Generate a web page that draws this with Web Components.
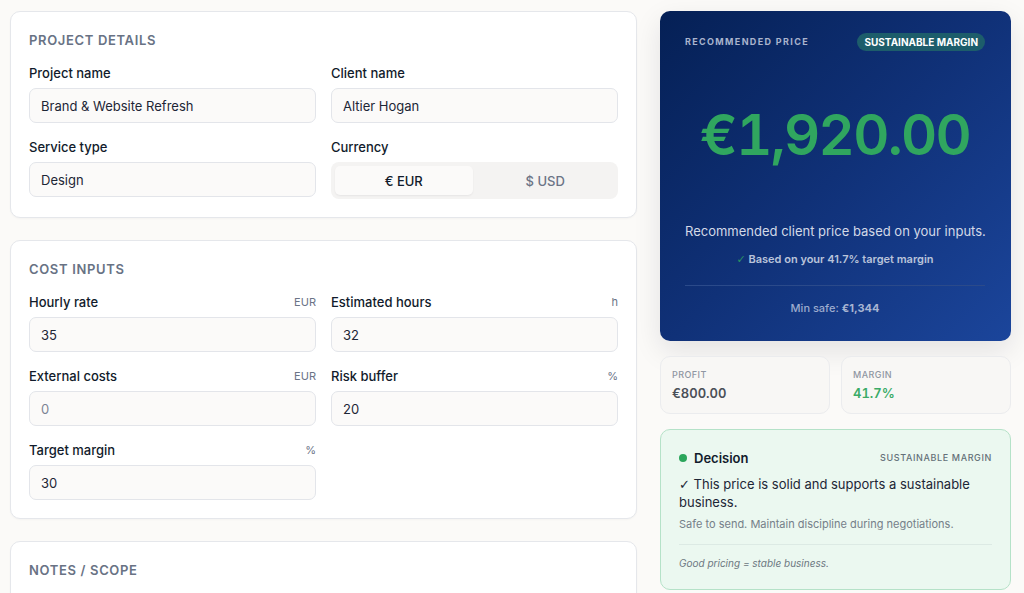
<!DOCTYPE html>
<html lang="en">
<head>
<meta charset="utf-8">
<meta name="viewport" content="width=device-width, initial-scale=1">
<title>Pricing calculator</title>
<style>
    body{
        margin: 0;
        background: #fbfaf8;
        color: #111b2b;
        font: 13px/18px Inter, "Liberation Sans", sans-serif;
    }
</style>
</head>
<body>

<pricing-page>
    <form-section heading="Project details">
        <text-field label="Project name" value="Brand &amp; Website Refresh"></text-field>
        <text-field label="Client name" value="Altier Hogan"></text-field>
        <select-field label="Service type" options="Design,Development,Consulting"></select-field>
        <currency-switch></currency-switch>
    </form-section>
    <form-section heading="Cost inputs">
        <text-field label="Hourly rate" unit="EUR" value="35"></text-field>
        <text-field label="Estimated hours" unit="h" value="32"></text-field>
        <text-field label="External costs" unit="EUR" placeholder="0"></text-field>
        <text-field label="Risk buffer" unit="%" value="20"></text-field>
        <text-field label="Target margin" unit="%" value="30"></text-field>
    </form-section>
    <form-section heading="Notes / Scope">
        <notes-field></notes-field>
    </form-section>

    <price-card slot="side">
        <span slot="badge">SUSTAINABLE MARGIN</span>
        <span slot="price">€1,920.00</span>
        <span slot="basis">Based on your 41.7% target margin</span>
        <span slot="safe">€1,344</span>
    </price-card>
    <stat-row slot="side">
        <stat-card label="PROFIT">€800.00</stat-card>
        <stat-card label="MARGIN" positive>41.7%</stat-card>
    </stat-row>
    <decision-card slot="side" status="SUSTAINABLE MARGIN" message="✓ This price is solid and supports a sustainable business.">
        <span slot="hint">Safe to send. Maintain discipline during negotiations.</span>
        <span slot="motto">Good pricing = stable business.</span>
    </decision-card>
</pricing-page>

<script>
// rules shared by every form control
const fieldStyle = `
    *{
        box-sizing: border-box;
    }
    :host{
        display: flex;
        flex-direction: column;
        gap: 6px;
        min-width: 0;
    }
    .label_row{
        display: flex;
        justify-content: space-between;
        align-items: center;
        height: 18px;
        font-weight: 500;
    }
    .unit{
        font-size: 11px;
        font-weight: 400;
        color: #6b7486;
    }
    .control{
        display: block;
        width: 100%;
        height: 35px;
        margin: 0;
        padding: 0 11px;
        border: 1px solid #e3e5ea;
        border-radius: 7px;
        background: #fbfaf9;
        color: #1d2636;
        font: inherit;
        appearance: none;
        outline: none;
    }
    .control:focus{
        border-color: #1a4296;
    }
    .control::placeholder{
        color: #7b8494;
        opacity: 1;
    }
`;

class BaseElement extends HTMLElement{
    constructor() {
        super();
        this.attachShadow({mode: 'open'});
    }

    attr(name) {
        return this.getAttribute(name) || '';
    }

    connectedCallback() {
        this.shadowRoot.innerHTML = this.render();
    }
}

class PricingPage extends BaseElement{
    render() {
        return `
<style>
    :host{
        display: grid;
        grid-template-columns: minmax(0, 1fr) 351px;
        align-items: start;
        gap: 23px;
        padding: 11px 13px 11px 10px;
    }
    main, aside{
        display: flex;
        flex-direction: column;
    }
    main{
        gap: 22px;
    }
    aside{
        gap: 15px;
    }
    @media (max-width: 800px){
        :host{
            grid-template-columns: minmax(0, 1fr);
        }
    }
</style>
<main><slot></slot></main>
<aside><slot name="side"></slot></aside>`;
    }
}

class FormSection extends BaseElement{
    render() {
        return `
<style>
    :host{
        display: block;
        padding: 18px;
        border: 1px solid #e5e7eb;
        border-radius: 10px;
        background: #fff;
        box-shadow: 0 1px 2px rgba(16, 24, 40, .03);
    }
    h2{
        margin: 0 0 14px;
        font-size: 13px;
        line-height: 20px;
        font-weight: 600;
        letter-spacing: .05em;
        text-transform: uppercase;
        color: #687284;
    }
    .fields{
        display: grid;
        grid-template-columns: repeat(2, minmax(0, 1fr));
        align-items: start;
        gap: 15px;
    }
</style>
<h2>${this.attr('heading')}</h2>
<div class="fields"><slot></slot></div>`;
    }
}

class TextField extends BaseElement{
    render() {
        const unit = this.attr('unit');
        return `
<style>${fieldStyle}</style>
<div class="label_row">
    <label for="control">${this.attr('label')}</label>
    ${unit ? `<span class="unit">${unit}</span>` : ''}
</div>
<input class="control" id="control" type="text" value="${this.attr('value').replace(/&/g, '&amp;')}" placeholder="${this.attr('placeholder')}">`;
    }
}

class SelectField extends BaseElement{
    render() {
        const options = this.attr('options').split(',');
        return `
<style>${fieldStyle}</style>
<div class="label_row"><label for="control">${this.attr('label')}</label></div>
<select class="control" id="control">
    ${options.map(name => `<option>${name}</option>`).join('')}
</select>`;
    }
}

// spans both columns of the section
class NotesField extends BaseElement{
    render() {
        return `
<style>
    ${fieldStyle}
    :host{
        grid-column: 1 / -1;
    }
    textarea.control{
        height: 90px;
        padding: 9px 11px;
        resize: vertical;
    }
</style>
<textarea class="control" aria-label="Notes / Scope"></textarea>`;
    }
}

class CurrencySwitch extends BaseElement{
    render() {
        return `
<style>
    ${fieldStyle}
    .switch{
        display: flex;
        gap: 4px;
        height: 37px;
        padding: 4px;
        border-radius: 8px;
        background: #f4f3f2;
    }
    button{
        flex: 1;
        padding: 0;
        border: 0;
        border-radius: 5px;
        background: none;
        color: #6b7486;
        font: inherit;
        font-weight: 500;
        cursor: pointer;
    }
    button[aria-pressed="true"]{
        background: #fbfaf9;
        color: #111b2b;
        box-shadow: 0 1px 2px rgba(16, 24, 40, .06);
    }
</style>
<div class="label_row"><span id="label">Currency</span></div>
<div class="switch" role="group" aria-labelledby="label">
    <button type="button" aria-pressed="true">€ EUR</button>
    <button type="button" aria-pressed="false">$ USD</button>
</div>`;
    }

    connectedCallback() {
        super.connectedCallback();
        const buttons = this.shadowRoot.querySelectorAll('button');
        buttons.forEach(button => button.addEventListener('click', () => {
            buttons.forEach(b => b.setAttribute('aria-pressed', b === button));
        }));
    }
}

class PriceCard extends BaseElement{
    render() {
        return `
<style>
    :host{
        display: flex;
        flex-direction: column;
        padding: 22px 26px 25px 25px;
        border-radius: 10px;
        background: linear-gradient(135deg, #052055 0%, #103178 50%, #1b459b 100%);
        box-shadow: 0 10px 28px rgba(16, 24, 40, .1);
        color: #fff;
        text-align: center;
    }
    .top{
        display: flex;
        justify-content: space-between;
        align-items: center;
        font-size: 10px;
        line-height: 18px;
        font-weight: 700;
        white-space: nowrap;
    }
    .title{
        font-size: 9px;
        letter-spacing: .15em;
        color: #a9b4cd;
    }
    .badge{
        padding: 0 7px;
        border-radius: 9px;
        background: #1d5d6b;
    }
    .price{
        padding: 56px 0 58px;
        font-size: 56px;
        line-height: 56px;
        font-weight: 600;
        font-variant-numeric: tabular-nums;
        letter-spacing: -.03em;
        color: #30a65f;
    }
    .lead{
        line-height: 20px;
        color: #d3d9e7;
        white-space: nowrap;
    }
    .basis{
        margin: 10px 0 18px;
        font-size: 11px;
        line-height: 16px;
        font-weight: 600;
        color: #b9c3da;
    }
    .tick{
        font-family: "DejaVu Sans", sans-serif;
        line-height: 1;
        color: #2a9363;
    }
    .safe{
        padding-top: 14px;
        border-top: 1px solid #2b4a8a;
        font-size: 11px;
        line-height: 16px;
        font-weight: 500;
        color: #9dacce;
    }
    .safe b{
        font-weight: 700;
        color: #a8b5d2;
    }
</style>
<div class="top">
    <span class="title">RECOMMENDED PRICE</span>
    <span class="badge"><slot name="badge"></slot></span>
</div>
<div class="price"><slot name="price"></slot></div>
<div class="lead">Recommended client price based on your inputs.</div>
<div class="basis"><span class="tick">✓</span> <slot name="basis"></slot></div>
<div class="safe">Min safe: <b><slot name="safe"></slot></b></div>`;
    }
}

class StatRow extends BaseElement{
    render() {
        return `
<style>
    :host{
        display: grid;
        grid-template-columns: repeat(2, minmax(0, 1fr));
        gap: 11px;
    }
</style>
<slot></slot>`;
    }
}

class StatCard extends BaseElement{
    render() {
        return `
<style>
    :host{
        display: block;
        padding: 11px;
        border: 1px solid #ebecee;
        border-radius: 10px;
        background: #f8f7f5;
        font-weight: 600;
        font-variant-numeric: tabular-nums;
        color: #4b5058;
    }
    :host([positive]){
        color: #3aab67;
    }
    .label{
        margin-bottom: 2px;
        font-size: 9px;
        line-height: 14px;
        font-weight: 500;
        letter-spacing: .05em;
        color: #8f96a2;
    }
</style>
<div class="label">${this.attr('label')}</div>
<slot></slot>`;
    }
}

class DecisionCard extends BaseElement{
    render() {
        return `
<style>
    :host{
        display: block;
        padding: 18px;
        border: 1px solid #b5e2c8;
        border-radius: 10px;
        background: #ebf8f0;
    }
    .top{
        display: flex;
        align-items: center;
        height: 20px;
        margin-bottom: 7px;
    }
    .dot{
        width: 8px;
        height: 8px;
        margin-right: 7px;
        border-radius: 50%;
        background: #2ba65b;
    }
    h3{
        flex: 1;
        margin: 0;
        font-size: 13px;
        font-weight: 600;
    }
    .status{
        font-size: 9px;
        font-weight: 500;
        letter-spacing: .07em;
        color: #647078;
    }
    p{
        margin: 0;
        color: #1d2636;
    }
    /* the tick that opens the message */
    .message::first-letter{
        font-family: "DejaVu Sans", sans-serif;
        font-weight: 700;
        line-height: 1;
    }
    .hint{
        margin-top: 5px;
        padding-bottom: 12px;
        border-bottom: 1px solid #dceae4;
        font-size: 11px;
        line-height: 16px;
        color: #758089;
    }
    .motto{
        margin-top: 11px;
        font-size: 10px;
        line-height: 15px;
        font-style: italic;
        color: #6c7780;
    }
</style>
<div class="top">
    <span class="dot"></span>
    <h3>Decision</h3>
    <span class="status">${this.attr('status')}</span>
</div>
<p class="message">${this.attr('message')}</p>
<p class="hint"><slot name="hint"></slot></p>
<p class="motto"><slot name="motto"></slot></p>`;
    }
}

customElements.define('pricing-page', PricingPage);
customElements.define('form-section', FormSection);
customElements.define('text-field', TextField);
customElements.define('select-field', SelectField);
customElements.define('notes-field', NotesField);
customElements.define('currency-switch', CurrencySwitch);
customElements.define('price-card', PriceCard);
customElements.define('stat-row', StatRow);
customElements.define('stat-card', StatCard);
customElements.define('decision-card', DecisionCard);
</script>
</body>
</html>
